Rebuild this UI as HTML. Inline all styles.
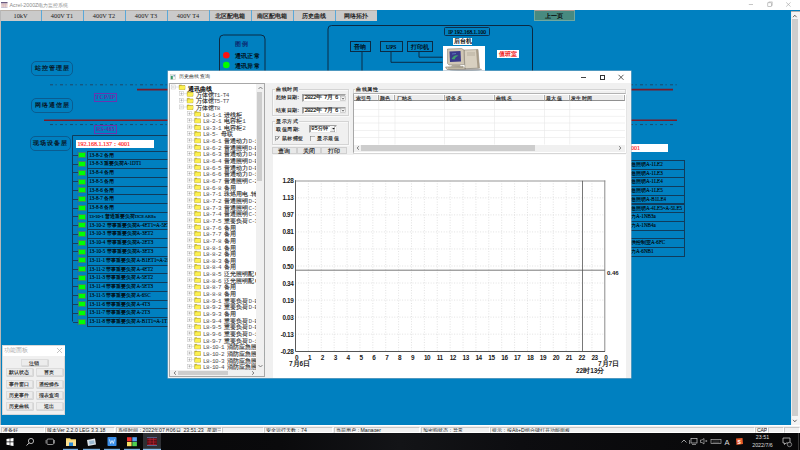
<!DOCTYPE html>
<html><head><meta charset="utf-8">
<style>
*{margin:0;padding:0;box-sizing:border-box}
html,body{width:800px;height:450px;overflow:hidden;background:#0080c0;font-family:"Liberation Sans",sans-serif;}
.a{position:absolute}
#title{left:0;top:0;width:800px;height:10px;background:#fff}
#tabs{left:0;top:10px;width:800px;height:11.3px;background:#0080c0}
.tab+.tab{box-shadow:-1px 0 0 #5aa8d8}
.tab.c{font-family:"Liberation Sans",sans-serif;font-weight:bold;font-size:6px;color:#222}
.tab{position:absolute;top:0;height:11.3px;background:#cacaca;border-top:0.6px solid #b8b0a8;font:6.3px "Liberation Serif",serif;color:#1a1a1a;text-align:center;line-height:10.5px;white-space:nowrap}
#main{left:1px;top:21px;width:790px;height:405px;background:#0080c0}
#vscroll{left:791px;top:10.5px;width:9px;height:414.5px;background:#f4f4f4;border-top:0.6px solid #b0b0b0;box-shadow:inset 0.6px 0 0 #e8e8e8}
#status{left:0;top:425px;width:800px;height:8px;background:#f0f0f0;border-top:0.6px solid #fff}
#taskbar{left:0;top:433px;width:800px;height:17px;background:#0f1012}

.lbox{position:absolute;border:1px solid #0b5c90;border-radius:5px;font:bold 5.8px "Liberation Sans",sans-serif;color:#08141e;text-align:center;letter-spacing:1px;text-indent:1px;white-space:nowrap}
.pbox{position:absolute;border:0.8px solid #6a34b0;font:bold 6px "Liberation Serif",serif;color:#6030a8;text-align:center;white-space:nowrap}
.row{position:absolute;left:87px;width:520px;height:9.77px;border:1px solid #103c5c;font:5.1px "Liberation Serif",serif;color:#000;line-height:7.2px;padding-left:1.2px;-webkit-text-stroke:0.1px #000;white-space:nowrap;overflow:hidden}
.rrow{position:absolute;left:620px;width:64.5px;height:9.7px;border:1px solid #103c5c;border-left:none;font:5.1px "Liberation Serif",serif;color:#000;-webkit-text-stroke:0.1px #000;line-height:7px;padding-left:11px;white-space:nowrap;overflow:hidden}
.gsq{position:absolute;left:78px;width:8.2px;height:6px;background:#00ff00;border:0.5px solid #3a8a6a}
.stub{position:absolute;left:72.5px;width:5px;height:0.7px;background:#1a4060}
.nbox{position:absolute;border:1px solid #0b2a44;font:5.6px "Liberation Serif",serif;color:#000;text-align:center;white-space:nowrap;-webkit-text-stroke:0.15px #000}

#dlg{left:168px;top:71px;width:463px;height:307px;background:#f0f0f0;box-shadow:0 0 0 0.5px #9ab0c0;overflow:hidden}
#dlg .in{position:absolute;left:-168px;top:-71px;width:800px;height:450px}
.tx{position:absolute;width:4px;height:4px;border:0.5px dotted #b0b0b0}
.tx::after{content:"";position:absolute;left:0.8px;top:1.5px;width:1.6px;height:0.5px;background:#888}
.tx i{position:absolute;left:1.45px;top:0.8px;width:0.5px;height:1.6px;background:#888}
.fd{position:absolute;width:6.5px;height:4.8px;background:linear-gradient(#fff8a0,#f0d830);border:0.5px solid #c0a020;border-radius:0.5px}
.tt{position:absolute;font:5.6px "Liberation Mono",monospace;color:#3a3a3a;height:6.6px;line-height:6.6px;white-space:nowrap;-webkit-text-stroke:0 !important}
.tt .as{letter-spacing:-0.6px;font-size:6px;color:#505050}
.tt .cj{letter-spacing:0.1px;color:#1a1a1a;-webkit-text-stroke:0.12px #333}
.tt.b{font-family:"Liberation Sans",sans-serif;font-weight:bold;font-size:6.3px;letter-spacing:0.3px;color:#000;top:-1px}
.grp{position:absolute;border:0.6px solid #d4d4d4;box-shadow:inset 0.6px 0.6px 0 #fff,0.6px 0.6px 0 #fff}
.gl{position:absolute;background:#f0f0f0;font:5.2px "Liberation Sans",sans-serif;color:#1a1a1a;line-height:7px;padding:0 1px;letter-spacing:0.5px;white-space:nowrap}
.lbl{position:absolute;font:5.2px "Liberation Sans",sans-serif;color:#1a1a1a;line-height:7px;letter-spacing:0.5px;white-space:nowrap}
.inp{position:absolute;background:#fff;border:0.6px solid;border-color:#a0a0a0 #e8e8e8 #e8e8e8 #a0a0a0;box-shadow:inset 0.6px 0.6px 0 #696969;font:5.6px "Liberation Mono",monospace;letter-spacing:-0.55px;color:#111;line-height:6.8px;white-space:nowrap;padding-left:1.2px}
.btn{position:absolute;background:#e8e8e8;border:0.5px solid #d0d0d0;font:6px "Liberation Sans",sans-serif;color:#222;line-height:7px;text-align:center}
.th{position:absolute;top:94.6px;height:6.9px;background:#ececec;border-right:0.6px solid #a8a8a8;border-bottom:0.7px solid #909090;box-shadow:inset -0.6px 0 0 #fff;font:5.4px "Liberation Sans",sans-serif;color:#1a1a1a;line-height:6.5px;letter-spacing:0.3px;padding-left:1.5px;white-space:nowrap}
.yl{position:absolute;left:270px;width:23.5px;text-align:right;font:bold 6.4px "Liberation Sans",sans-serif;color:#1a1a1a;letter-spacing:-0.35px;line-height:7px}
.xl{position:absolute;top:353.5px;font:bold 6.4px "Liberation Sans",sans-serif;color:#1a1a1a;letter-spacing:-0.35px;line-height:7px}

.fb{position:absolute;background:#ececec;border:0.5px solid #dcdcdc;box-shadow:0.6px 0.6px 0 #c4c4c4;font:5.1px "Liberation Sans",sans-serif;color:#111;letter-spacing:0.2px;line-height:7.5px;text-align:center;white-space:nowrap;-webkit-text-stroke:0.1px #222 !important}
.sp{position:absolute;top:0.5px;height:6.5px;border-left:0.6px solid #c8c8c8;border-top:0.6px solid #c8c8c8;border-right:0.6px solid #fff;border-bottom:0.6px solid #fff;font:5.2px "Liberation Sans",sans-serif;color:#222;line-height:5.8px;white-space:nowrap;padding-left:1px;overflow:hidden}
.lbl,.gl,.th,.btn,.tt,.inp,.fb{-webkit-text-stroke:0.15px #222}
</style></head><body>
<div id="title" class="a">
 <svg class="a" style="left:1px;top:1.5px" width="7" height="6"><rect x="0" y="0" width="6.5" height="5.5" fill="#f0e0e0"/><rect x="0" y="0" width="6.5" height="1.3" fill="#6a5a80"/><path d="M0 2.6 H6.5 M0 4 H6.5 M2.2 1.3 V5.5 M4.3 1.3 V5.5" stroke="#c8a0a0" stroke-width="0.4"/><rect x="0" y="5" width="6.5" height="0.5" fill="#a0a0c0"/></svg>
 <div class="a" style="left:9.5px;top:1px;font:5.3px 'Liberation Sans',sans-serif;color:#8a8a8a;line-height:8px;white-space:nowrap">Acrel-2000Z电力监控系统</div>
 <svg class="a" style="left:745px;top:0" width="50" height="10">
  <path d="M3.8 4.5 H8" stroke="#a0a0a0" stroke-width="0.6"/>
  <rect x="22.8" y="2.8" width="3.6" height="3.6" fill="none" stroke="#a0a0a0" stroke-width="0.6"/>
  <path d="M23.8 2.8 V1.9 H27.3 V5.4 H26.4" fill="none" stroke="#a0a0a0" stroke-width="0.5"/>
  <path d="M41.2 2.4 L45.6 6.6 M45.6 2.4 L41.2 6.6" stroke="#a0a0a0" stroke-width="0.6"/>
 </svg>
</div>
<div id="tabs" class="a">
 <div class="tab" style="left:0.50px;width:40px">10kV</div>
 <div class="tab" style="left:41.50px;width:41px">400V T1</div>
 <div class="tab" style="left:83.50px;width:41px">400V T2</div>
 <div class="tab" style="left:125.50px;width:41px">400V T3</div>
 <div class="tab" style="left:167.50px;width:41px">400V T4</div>
 <div class="tab c" style="left:209.50px;width:41px">北区配电箱</div>
 <div class="tab c" style="left:251.50px;width:41px">南区配电箱</div>
 <div class="tab c" style="left:293.50px;width:41px">历史曲线</div>
 <div class="tab c" style="left:335.50px;width:41px">网络拓扑</div>
</div>
<div id="main" class="a"></div>
<div class="a" style="left:0;top:10px;width:1px;height:11.3px;background:#b8b8b8"></div>
<div class="a" style="left:0;top:21px;width:1px;height:404px;background:#b8b8b8"></div>

<div id="diagram">
<svg class="a" style="left:0;top:0" width="800" height="450">
 <line x1="50" y1="84.8" x2="678" y2="84.8" stroke="#1e4868" stroke-width="1" stroke-dasharray="3 2.5 1.2 3.3"/>
 <line x1="137" y1="89.6" x2="673" y2="89.6" stroke="#7a1a2a" stroke-width="1.6"/>
 <line x1="44" y1="120.2" x2="677" y2="120.2" stroke="#7a1a2a" stroke-width="1.6"/>
 <line x1="50" y1="124.6" x2="674" y2="124.6" stroke="#1e4868" stroke-width="1" stroke-dasharray="3 2.5 1.2 3.3"/>
 <line x1="72.5" y1="135.5" x2="200" y2="135.5" stroke="#103c5c" stroke-width="1"/>
 <line x1="72.5" y1="135.5" x2="72.5" y2="321.5" stroke="#103c5c" stroke-width="1"/>
 <line x1="77.5" y1="150.5" x2="77.5" y2="326" stroke="#2a6a9a" stroke-width="0.6"/>
 <!-- network box -->
 <path d="M328 72 V29 Q328 25.5 331.5 25.5 H529 Q532.5 25.5 532.5 29 V72" fill="none" stroke="#0b2a44" stroke-width="1"/>
 <line x1="362" y1="52" x2="362" y2="72" stroke="#0b2a44" stroke-width="1"/>
 <path d="M391 52 V62.3 H442.5" fill="none" stroke="#0b2a44" stroke-width="1"/>
 <path d="M419 52 V57.2 H442.5" fill="none" stroke="#0b2a44" stroke-width="1"/>
 <!-- legend box -->
 <path d="M219.5 72 V39 Q219.5 35 223.5 35 H261 Q265 35 265 39 V72" fill="none" stroke="#0b2a44" stroke-width="1"/>
 <circle cx="226.3" cy="55.3" r="3.3" fill="#ff1010"/>
 <circle cx="226.3" cy="65" r="3.3" fill="#00ff00"/>
</svg>
<div class="lbox" style="left:31px;top:61px;width:42px;height:14.5px;line-height:12.5px">站控管理层</div>
<div class="lbox" style="left:31px;top:97.5px;width:41.5px;height:15px;line-height:13px">网络通信层</div>
<div class="lbox" style="left:30px;top:136px;width:40.5px;height:14.5px;line-height:12.5px">现场设备层</div>
<div class="pbox" style="left:93.8px;top:92.5px;width:23.2px;height:9.3px;line-height:7.5px">TCP/IP</div>
<div class="pbox" style="left:94px;top:125px;width:23px;height:9px;line-height:7.5px">RS-485</div>
<div class="a" style="left:76px;top:140.3px;width:78px;height:8px;background:#fff;font:6px 'Liberation Serif',serif;color:#ff1a1a;-webkit-text-stroke:0.15px #ff1a1a;line-height:8px;padding-left:1.5px;white-space:nowrap">192.168.1.137：4001</div>
<div class="a" style="left:631px;top:143.9px;width:37.2px;height:8px;background:#fff;font:6px 'Liberation Serif',serif;color:#ff1a1a;-webkit-text-stroke:0.15px #ff1a1a;line-height:8px;white-space:nowrap">001</div>
<div class="row" style="top:150.50px">13-8-2 备用</div>
<div class="gsq" style="top:152.20px"></div>
<div class="stub" style="top:154.90px"></div>
<div class="row" style="top:159.27px">13-8-3 重要负荷A-1DT1</div>
<div class="gsq" style="top:160.97px"></div>
<div class="stub" style="top:163.67px"></div>
<div class="row" style="top:168.04px">13-8-4 备用</div>
<div class="gsq" style="top:169.74px"></div>
<div class="stub" style="top:172.44px"></div>
<div class="row" style="top:176.81px">13-8-5 备用</div>
<div class="gsq" style="top:178.51px"></div>
<div class="stub" style="top:181.21px"></div>
<div class="row" style="top:185.58px">13-8-6 备用</div>
<div class="gsq" style="top:187.28px"></div>
<div class="stub" style="top:189.98px"></div>
<div class="row" style="top:194.35px">13-8-7 备用</div>
<div class="gsq" style="top:196.05px"></div>
<div class="stub" style="top:198.75px"></div>
<div class="row" style="top:203.12px">13-8-8 备用</div>
<div class="gsq" style="top:204.82px"></div>
<div class="stub" style="top:207.52px"></div>
<div class="row" style="top:211.89px;font-size:4.6px">13-10-1 普通重要负荷DCS ARSa</div>
<div class="gsq" style="top:213.59px"></div>
<div class="stub" style="top:216.29px"></div>
<div class="row" style="top:220.66px">13-10-2 带事重要负荷A-4ET1~A-5ET1</div>
<div class="gsq" style="top:222.36px"></div>
<div class="stub" style="top:225.06px"></div>
<div class="row" style="top:229.43px">13-10-3 带事重要负荷A-3ET2</div>
<div class="gsq" style="top:231.13px"></div>
<div class="stub" style="top:233.83px"></div>
<div class="row" style="top:238.20px">13-10-4 带事重要负荷A-2ET3</div>
<div class="gsq" style="top:239.90px"></div>
<div class="stub" style="top:242.60px"></div>
<div class="row" style="top:246.97px">13-10-5 带事重要负荷A-3ET3</div>
<div class="gsq" style="top:248.67px"></div>
<div class="stub" style="top:251.37px"></div>
<div class="row" style="top:255.74px">13-11-1 带事重要负荷A-B1ET1~A-2ET1</div>
<div class="gsq" style="top:257.44px"></div>
<div class="stub" style="top:260.14px"></div>
<div class="row" style="top:264.51px">13-11-2 带事重要负荷A-4ET2</div>
<div class="gsq" style="top:266.21px"></div>
<div class="stub" style="top:268.91px"></div>
<div class="row" style="top:273.28px">13-11-3 带事重要负荷A-5ET2</div>
<div class="gsq" style="top:274.98px"></div>
<div class="stub" style="top:277.68px"></div>
<div class="row" style="top:282.05px">13-11-4 带事重要负荷A-5ET3</div>
<div class="gsq" style="top:283.75px"></div>
<div class="stub" style="top:286.45px"></div>
<div class="row" style="top:290.82px">13-11-5 带事重要负荷A-6SC</div>
<div class="gsq" style="top:292.52px"></div>
<div class="stub" style="top:295.22px"></div>
<div class="row" style="top:299.59px">13-11-6 带事重要负荷A-4T3</div>
<div class="gsq" style="top:301.29px"></div>
<div class="stub" style="top:303.99px"></div>
<div class="row" style="top:308.36px">13-11-7 带事重要负荷A-2T3</div>
<div class="gsq" style="top:310.06px"></div>
<div class="stub" style="top:312.76px"></div>
<div class="row" style="top:317.13px">13-11-8 带事重要负荷A-B1T1~A-1T1</div>
<div class="gsq" style="top:318.83px"></div>
<div class="stub" style="top:321.53px"></div>
<div class="rrow" style="top:160.00px">急照明A-1LE2</div>
<div class="rrow" style="top:168.70px">急照明A-1LE3</div>
<div class="rrow" style="top:177.40px">急照明A-1LE4</div>
<div class="rrow" style="top:186.10px">急照明A-1LE5</div>
<div class="rrow" style="top:194.80px">急照明A-B1LE4</div>
<div class="rrow" style="top:203.50px">急照明A-4LE5~A-5LE5</div>
<div class="rrow" style="top:212.20px">力A-1NB3a</div>
<div class="rrow" style="top:220.90px">力A-1NB4a</div>
<div class="rrow" style="top:229.60px"></div>
<div class="rrow" style="top:238.30px">供控制室A-6FC</div>
<div class="rrow" style="top:247.00px">力A-6NB1</div>
<div class="a" style="left:234.5px;top:39.5px;font:bold 6.3px 'Liberation Sans',sans-serif;color:#0c2a70;letter-spacing:1px;white-space:nowrap">图例</div>
<div class="a" style="left:235.3px;top:52px;font:6.1px 'Liberation Sans',sans-serif;color:#000;-webkit-text-stroke:0.15px #000;letter-spacing:0.1px;white-space:nowrap;line-height:7px">通讯正常</div>
<div class="a" style="left:235.3px;top:61.7px;font:6.1px 'Liberation Sans',sans-serif;color:#000;-webkit-text-stroke:0.15px #000;letter-spacing:0.1px;white-space:nowrap;line-height:7px">通讯异常</div>
<div class="nbox" style="left:350px;top:40.5px;width:20.7px;height:11.3px;line-height:10px">音响</div>
<div class="nbox" style="left:380px;top:40.5px;width:22.5px;height:11.3px;line-height:10px">UPS</div>
<div class="nbox" style="left:406.5px;top:40.5px;width:26px;height:11.3px;line-height:10px">打印机</div>
<div class="nbox" style="left:443.7px;top:27px;width:46.8px;height:9.2px;line-height:8px;font-size:5.5px;border:0.8px solid #0c3050;border-radius:1.5px">IP 192.168.1.100</div>
<div class="a" style="left:452.7px;top:37.7px;width:19.8px;height:7.2px;background:#fff;font:5.6px 'Liberation Sans',sans-serif;color:#000;-webkit-text-stroke:0.2px #000;text-align:center;line-height:7.2px">后台机</div>
<svg class="a" style="left:442.5px;top:46.3px" width="42" height="26" viewBox="0 0 42 26">
 <rect width="42" height="26" fill="#fff"/>
 <ellipse cx="22" cy="23.5" rx="17" ry="1.6" fill="#555" opacity="0.5"/>
 <!-- tower -->
 <path d="M21 4 L35 3.5 L36.5 22 L22 22.8 Z" fill="#d8d0c0" stroke="#6a6458" stroke-width="0.4"/>
 <path d="M33 3.6 L35 3.5 L36.5 22 L34.5 22.2 Z" fill="#a89c88"/>
 <path d="M24 7 H32 M24 9 H32" stroke="#8a8070" stroke-width="0.4"/>
 <!-- monitor -->
 <path d="M4.5 3 L18.5 2.5 L21 4 L21.5 18.5 L6 19 L4.5 17.5 Z" fill="#cfc6b4" stroke="#5a5448" stroke-width="0.4"/>
 <path d="M6.5 5.5 L17.5 5 L18 15.5 L7 16 Z" fill="#3a3a8a"/>
 <path d="M8.5 13 Q11 8 15.5 9.5 Q12 11 11.5 13.5 Z" fill="#40a070"/>
 <path d="M9 8 L13 7.5" stroke="#6a8ad0" stroke-width="0.7"/>
 <!-- base & keyboard -->
 <path d="M9 19 H17 L18 20.5 H8 Z" fill="#b0a898"/>
 <path d="M2.5 21 L20 20.3 L22.5 23 L4 23.5 Z" fill="#d4ccb8" stroke="#5a5448" stroke-width="0.4"/>
 <path d="M5 22 L20 21.5" stroke="#7a7260" stroke-width="0.5"/>
</svg>
<div class="a" style="left:496.8px;top:50px;width:22.2px;height:8.2px;background:#fff;font:5.8px 'Liberation Sans',sans-serif;color:#f01010;-webkit-text-stroke:0.2px #f01010;text-align:center;line-height:8.2px">值班室</div>
<div class="a" style="left:533.6px;top:10px;width:41.4px;height:11.3px;background:#488a80;border:0.5px solid #70a8a0;border-top-color:#b09890;font:5.8px 'Liberation Sans',sans-serif;color:#0a0a0a;-webkit-text-stroke:0.2px #000;letter-spacing:0.3px;text-align:center;line-height:10.5px">上一页</div>
</div>

<div id="dlg" class="a"><div class="in">
 <div class="a" style="left:168px;top:71px;width:463px;height:12px;background:#fff"></div>
 <svg class="a" style="left:170px;top:73.5px" width="6" height="6"><rect x="0.3" y="0.3" width="5.4" height="5.4" fill="#f4f4f4" stroke="#c8c8c8" stroke-width="0.5"/><rect x="0.8" y="1.8" width="2" height="3.5" fill="#3a9a6a"/><rect x="3.5" y="1" width="1.5" height="1.5" fill="#7aa0c0"/></svg>
 <div class="a" style="left:178.5px;top:71.8px;font:5.2px 'Liberation Sans',sans-serif;color:#333;letter-spacing:0.3px;line-height:8px;white-space:nowrap">历史曲线查询</div>
 <div class="a" style="left:581px;top:76.8px;width:5px;height:0.8px;background:#444"></div>
 <div class="a" style="left:599.5px;top:74.5px;width:5px;height:5px;border:0.8px solid #333"></div>
 <svg class="a" style="left:617px;top:73.5px" width="8" height="7"><path d="M1.5 0.8 L6.5 5.8 M6.5 0.8 L1.5 5.8" stroke="#333" stroke-width="0.8"/></svg>
 <!-- tree panel -->
 <div class="a" style="left:169px;top:83px;width:95.5px;height:294px;background:#fff;border:0.6px solid #a8a8a8"></div>
<svg class="a" style="left:0;top:0" width="800" height="450">
<rect x="171.20" y="85.00" width="4" height="4" fill="none" stroke="#c0c0c0" stroke-width="0.5"/>
<line x1="172.00" y1="87.00" x2="174.40" y2="87.00" stroke="#909090" stroke-width="0.5"/>
<line x1="175.20" y1="87.00" x2="179.00" y2="87.00" stroke="#c8c8c8" stroke-width="0.5"/>
<path d="M179.20 85.00 h2.2 l0.6 0.6 h3 v3.9 h-5.8 z" fill="#d8c828" stroke="#8a7a10" stroke-width="0.4"/>
<path d="M179.90 86.10 h5.4 l-0.7 3.4 h-5.4 z" fill="#fcf050"/>
<rect x="179.50" y="91.65" width="4" height="4" fill="none" stroke="#c0c0c0" stroke-width="0.5"/>
<line x1="180.30" y1="93.65" x2="182.70" y2="93.65" stroke="#909090" stroke-width="0.5"/>
<line x1="183.50" y1="93.65" x2="187.00" y2="93.65" stroke="#c8c8c8" stroke-width="0.5"/>
<line x1="181.50" y1="92.45" x2="181.50" y2="94.85" stroke="#909090" stroke-width="0.5"/>
<path d="M187.20 91.65 h2.2 l0.6 0.6 h3 v3.9 h-5.8 z" fill="#d8c828" stroke="#8a7a10" stroke-width="0.4"/>
<path d="M187.90 92.75 h5.4 l-0.7 3.4 h-5.4 z" fill="#fcf050"/>
<rect x="179.50" y="98.30" width="4" height="4" fill="none" stroke="#c0c0c0" stroke-width="0.5"/>
<line x1="180.30" y1="100.30" x2="182.70" y2="100.30" stroke="#909090" stroke-width="0.5"/>
<line x1="183.50" y1="100.30" x2="187.00" y2="100.30" stroke="#c8c8c8" stroke-width="0.5"/>
<line x1="181.50" y1="99.10" x2="181.50" y2="101.50" stroke="#909090" stroke-width="0.5"/>
<path d="M187.20 98.30 h2.2 l0.6 0.6 h3 v3.9 h-5.8 z" fill="#d8c828" stroke="#8a7a10" stroke-width="0.4"/>
<path d="M187.90 99.40 h5.4 l-0.7 3.4 h-5.4 z" fill="#fcf050"/>
<rect x="179.50" y="104.95" width="4" height="4" fill="none" stroke="#c0c0c0" stroke-width="0.5"/>
<line x1="180.30" y1="106.95" x2="182.70" y2="106.95" stroke="#909090" stroke-width="0.5"/>
<line x1="183.50" y1="106.95" x2="187.00" y2="106.95" stroke="#c8c8c8" stroke-width="0.5"/>
<path d="M187.20 104.95 h2.2 l0.6 0.6 h3 v3.9 h-5.8 z" fill="#d8c828" stroke="#8a7a10" stroke-width="0.4"/>
<path d="M187.90 106.05 h5.4 l-0.7 3.4 h-5.4 z" fill="#fcf050"/>
<rect x="187.50" y="111.60" width="4" height="4" fill="none" stroke="#c0c0c0" stroke-width="0.5"/>
<line x1="188.30" y1="113.60" x2="190.70" y2="113.60" stroke="#909090" stroke-width="0.5"/>
<line x1="191.50" y1="113.60" x2="194.50" y2="113.60" stroke="#c8c8c8" stroke-width="0.5"/>
<line x1="189.50" y1="112.40" x2="189.50" y2="114.80" stroke="#909090" stroke-width="0.5"/>
<path d="M194.70 111.60 h2.2 l0.6 0.6 h3 v3.9 h-5.8 z" fill="#d8c828" stroke="#8a7a10" stroke-width="0.4"/>
<path d="M195.40 112.70 h5.4 l-0.7 3.4 h-5.4 z" fill="#fcf050"/>
<rect x="187.50" y="118.25" width="4" height="4" fill="none" stroke="#c0c0c0" stroke-width="0.5"/>
<line x1="188.30" y1="120.25" x2="190.70" y2="120.25" stroke="#909090" stroke-width="0.5"/>
<line x1="191.50" y1="120.25" x2="194.50" y2="120.25" stroke="#c8c8c8" stroke-width="0.5"/>
<line x1="189.50" y1="119.05" x2="189.50" y2="121.45" stroke="#909090" stroke-width="0.5"/>
<path d="M194.70 118.25 h2.2 l0.6 0.6 h3 v3.9 h-5.8 z" fill="#d8c828" stroke="#8a7a10" stroke-width="0.4"/>
<path d="M195.40 119.35 h5.4 l-0.7 3.4 h-5.4 z" fill="#fcf050"/>
<rect x="187.50" y="124.90" width="4" height="4" fill="none" stroke="#c0c0c0" stroke-width="0.5"/>
<line x1="188.30" y1="126.90" x2="190.70" y2="126.90" stroke="#909090" stroke-width="0.5"/>
<line x1="191.50" y1="126.90" x2="194.50" y2="126.90" stroke="#c8c8c8" stroke-width="0.5"/>
<line x1="189.50" y1="125.70" x2="189.50" y2="128.10" stroke="#909090" stroke-width="0.5"/>
<path d="M194.70 124.90 h2.2 l0.6 0.6 h3 v3.9 h-5.8 z" fill="#d8c828" stroke="#8a7a10" stroke-width="0.4"/>
<path d="M195.40 126.00 h5.4 l-0.7 3.4 h-5.4 z" fill="#fcf050"/>
<rect x="187.50" y="131.55" width="4" height="4" fill="none" stroke="#c0c0c0" stroke-width="0.5"/>
<line x1="188.30" y1="133.55" x2="190.70" y2="133.55" stroke="#909090" stroke-width="0.5"/>
<line x1="191.50" y1="133.55" x2="194.50" y2="133.55" stroke="#c8c8c8" stroke-width="0.5"/>
<line x1="189.50" y1="132.35" x2="189.50" y2="134.75" stroke="#909090" stroke-width="0.5"/>
<path d="M194.70 131.55 h2.2 l0.6 0.6 h3 v3.9 h-5.8 z" fill="#d8c828" stroke="#8a7a10" stroke-width="0.4"/>
<path d="M195.40 132.65 h5.4 l-0.7 3.4 h-5.4 z" fill="#fcf050"/>
<rect x="187.50" y="138.20" width="4" height="4" fill="none" stroke="#c0c0c0" stroke-width="0.5"/>
<line x1="188.30" y1="140.20" x2="190.70" y2="140.20" stroke="#909090" stroke-width="0.5"/>
<line x1="191.50" y1="140.20" x2="194.50" y2="140.20" stroke="#c8c8c8" stroke-width="0.5"/>
<line x1="189.50" y1="139.00" x2="189.50" y2="141.40" stroke="#909090" stroke-width="0.5"/>
<path d="M194.70 138.20 h2.2 l0.6 0.6 h3 v3.9 h-5.8 z" fill="#d8c828" stroke="#8a7a10" stroke-width="0.4"/>
<path d="M195.40 139.30 h5.4 l-0.7 3.4 h-5.4 z" fill="#fcf050"/>
<rect x="187.50" y="144.85" width="4" height="4" fill="none" stroke="#c0c0c0" stroke-width="0.5"/>
<line x1="188.30" y1="146.85" x2="190.70" y2="146.85" stroke="#909090" stroke-width="0.5"/>
<line x1="191.50" y1="146.85" x2="194.50" y2="146.85" stroke="#c8c8c8" stroke-width="0.5"/>
<line x1="189.50" y1="145.65" x2="189.50" y2="148.05" stroke="#909090" stroke-width="0.5"/>
<path d="M194.70 144.85 h2.2 l0.6 0.6 h3 v3.9 h-5.8 z" fill="#d8c828" stroke="#8a7a10" stroke-width="0.4"/>
<path d="M195.40 145.95 h5.4 l-0.7 3.4 h-5.4 z" fill="#fcf050"/>
<rect x="187.50" y="151.50" width="4" height="4" fill="none" stroke="#c0c0c0" stroke-width="0.5"/>
<line x1="188.30" y1="153.50" x2="190.70" y2="153.50" stroke="#909090" stroke-width="0.5"/>
<line x1="191.50" y1="153.50" x2="194.50" y2="153.50" stroke="#c8c8c8" stroke-width="0.5"/>
<line x1="189.50" y1="152.30" x2="189.50" y2="154.70" stroke="#909090" stroke-width="0.5"/>
<path d="M194.70 151.50 h2.2 l0.6 0.6 h3 v3.9 h-5.8 z" fill="#d8c828" stroke="#8a7a10" stroke-width="0.4"/>
<path d="M195.40 152.60 h5.4 l-0.7 3.4 h-5.4 z" fill="#fcf050"/>
<rect x="187.50" y="158.15" width="4" height="4" fill="none" stroke="#c0c0c0" stroke-width="0.5"/>
<line x1="188.30" y1="160.15" x2="190.70" y2="160.15" stroke="#909090" stroke-width="0.5"/>
<line x1="191.50" y1="160.15" x2="194.50" y2="160.15" stroke="#c8c8c8" stroke-width="0.5"/>
<line x1="189.50" y1="158.95" x2="189.50" y2="161.35" stroke="#909090" stroke-width="0.5"/>
<path d="M194.70 158.15 h2.2 l0.6 0.6 h3 v3.9 h-5.8 z" fill="#d8c828" stroke="#8a7a10" stroke-width="0.4"/>
<path d="M195.40 159.25 h5.4 l-0.7 3.4 h-5.4 z" fill="#fcf050"/>
<rect x="187.50" y="164.80" width="4" height="4" fill="none" stroke="#c0c0c0" stroke-width="0.5"/>
<line x1="188.30" y1="166.80" x2="190.70" y2="166.80" stroke="#909090" stroke-width="0.5"/>
<line x1="191.50" y1="166.80" x2="194.50" y2="166.80" stroke="#c8c8c8" stroke-width="0.5"/>
<line x1="189.50" y1="165.60" x2="189.50" y2="168.00" stroke="#909090" stroke-width="0.5"/>
<path d="M194.70 164.80 h2.2 l0.6 0.6 h3 v3.9 h-5.8 z" fill="#d8c828" stroke="#8a7a10" stroke-width="0.4"/>
<path d="M195.40 165.90 h5.4 l-0.7 3.4 h-5.4 z" fill="#fcf050"/>
<rect x="187.50" y="171.45" width="4" height="4" fill="none" stroke="#c0c0c0" stroke-width="0.5"/>
<line x1="188.30" y1="173.45" x2="190.70" y2="173.45" stroke="#909090" stroke-width="0.5"/>
<line x1="191.50" y1="173.45" x2="194.50" y2="173.45" stroke="#c8c8c8" stroke-width="0.5"/>
<line x1="189.50" y1="172.25" x2="189.50" y2="174.65" stroke="#909090" stroke-width="0.5"/>
<path d="M194.70 171.45 h2.2 l0.6 0.6 h3 v3.9 h-5.8 z" fill="#d8c828" stroke="#8a7a10" stroke-width="0.4"/>
<path d="M195.40 172.55 h5.4 l-0.7 3.4 h-5.4 z" fill="#fcf050"/>
<rect x="187.50" y="178.10" width="4" height="4" fill="none" stroke="#c0c0c0" stroke-width="0.5"/>
<line x1="188.30" y1="180.10" x2="190.70" y2="180.10" stroke="#909090" stroke-width="0.5"/>
<line x1="191.50" y1="180.10" x2="194.50" y2="180.10" stroke="#c8c8c8" stroke-width="0.5"/>
<line x1="189.50" y1="178.90" x2="189.50" y2="181.30" stroke="#909090" stroke-width="0.5"/>
<path d="M194.70 178.10 h2.2 l0.6 0.6 h3 v3.9 h-5.8 z" fill="#d8c828" stroke="#8a7a10" stroke-width="0.4"/>
<path d="M195.40 179.20 h5.4 l-0.7 3.4 h-5.4 z" fill="#fcf050"/>
<rect x="187.50" y="184.75" width="4" height="4" fill="none" stroke="#c0c0c0" stroke-width="0.5"/>
<line x1="188.30" y1="186.75" x2="190.70" y2="186.75" stroke="#909090" stroke-width="0.5"/>
<line x1="191.50" y1="186.75" x2="194.50" y2="186.75" stroke="#c8c8c8" stroke-width="0.5"/>
<line x1="189.50" y1="185.55" x2="189.50" y2="187.95" stroke="#909090" stroke-width="0.5"/>
<path d="M194.70 184.75 h2.2 l0.6 0.6 h3 v3.9 h-5.8 z" fill="#d8c828" stroke="#8a7a10" stroke-width="0.4"/>
<path d="M195.40 185.85 h5.4 l-0.7 3.4 h-5.4 z" fill="#fcf050"/>
<rect x="187.50" y="191.40" width="4" height="4" fill="none" stroke="#c0c0c0" stroke-width="0.5"/>
<line x1="188.30" y1="193.40" x2="190.70" y2="193.40" stroke="#909090" stroke-width="0.5"/>
<line x1="191.50" y1="193.40" x2="194.50" y2="193.40" stroke="#c8c8c8" stroke-width="0.5"/>
<line x1="189.50" y1="192.20" x2="189.50" y2="194.60" stroke="#909090" stroke-width="0.5"/>
<path d="M194.70 191.40 h2.2 l0.6 0.6 h3 v3.9 h-5.8 z" fill="#d8c828" stroke="#8a7a10" stroke-width="0.4"/>
<path d="M195.40 192.50 h5.4 l-0.7 3.4 h-5.4 z" fill="#fcf050"/>
<rect x="187.50" y="198.05" width="4" height="4" fill="none" stroke="#c0c0c0" stroke-width="0.5"/>
<line x1="188.30" y1="200.05" x2="190.70" y2="200.05" stroke="#909090" stroke-width="0.5"/>
<line x1="191.50" y1="200.05" x2="194.50" y2="200.05" stroke="#c8c8c8" stroke-width="0.5"/>
<line x1="189.50" y1="198.85" x2="189.50" y2="201.25" stroke="#909090" stroke-width="0.5"/>
<path d="M194.70 198.05 h2.2 l0.6 0.6 h3 v3.9 h-5.8 z" fill="#d8c828" stroke="#8a7a10" stroke-width="0.4"/>
<path d="M195.40 199.15 h5.4 l-0.7 3.4 h-5.4 z" fill="#fcf050"/>
<rect x="187.50" y="204.70" width="4" height="4" fill="none" stroke="#c0c0c0" stroke-width="0.5"/>
<line x1="188.30" y1="206.70" x2="190.70" y2="206.70" stroke="#909090" stroke-width="0.5"/>
<line x1="191.50" y1="206.70" x2="194.50" y2="206.70" stroke="#c8c8c8" stroke-width="0.5"/>
<line x1="189.50" y1="205.50" x2="189.50" y2="207.90" stroke="#909090" stroke-width="0.5"/>
<path d="M194.70 204.70 h2.2 l0.6 0.6 h3 v3.9 h-5.8 z" fill="#d8c828" stroke="#8a7a10" stroke-width="0.4"/>
<path d="M195.40 205.80 h5.4 l-0.7 3.4 h-5.4 z" fill="#fcf050"/>
<rect x="187.50" y="211.35" width="4" height="4" fill="none" stroke="#c0c0c0" stroke-width="0.5"/>
<line x1="188.30" y1="213.35" x2="190.70" y2="213.35" stroke="#909090" stroke-width="0.5"/>
<line x1="191.50" y1="213.35" x2="194.50" y2="213.35" stroke="#c8c8c8" stroke-width="0.5"/>
<line x1="189.50" y1="212.15" x2="189.50" y2="214.55" stroke="#909090" stroke-width="0.5"/>
<path d="M194.70 211.35 h2.2 l0.6 0.6 h3 v3.9 h-5.8 z" fill="#d8c828" stroke="#8a7a10" stroke-width="0.4"/>
<path d="M195.40 212.45 h5.4 l-0.7 3.4 h-5.4 z" fill="#fcf050"/>
<rect x="187.50" y="218.00" width="4" height="4" fill="none" stroke="#c0c0c0" stroke-width="0.5"/>
<line x1="188.30" y1="220.00" x2="190.70" y2="220.00" stroke="#909090" stroke-width="0.5"/>
<line x1="191.50" y1="220.00" x2="194.50" y2="220.00" stroke="#c8c8c8" stroke-width="0.5"/>
<line x1="189.50" y1="218.80" x2="189.50" y2="221.20" stroke="#909090" stroke-width="0.5"/>
<path d="M194.70 218.00 h2.2 l0.6 0.6 h3 v3.9 h-5.8 z" fill="#d8c828" stroke="#8a7a10" stroke-width="0.4"/>
<path d="M195.40 219.10 h5.4 l-0.7 3.4 h-5.4 z" fill="#fcf050"/>
<rect x="187.50" y="224.65" width="4" height="4" fill="none" stroke="#c0c0c0" stroke-width="0.5"/>
<line x1="188.30" y1="226.65" x2="190.70" y2="226.65" stroke="#909090" stroke-width="0.5"/>
<line x1="191.50" y1="226.65" x2="194.50" y2="226.65" stroke="#c8c8c8" stroke-width="0.5"/>
<line x1="189.50" y1="225.45" x2="189.50" y2="227.85" stroke="#909090" stroke-width="0.5"/>
<path d="M194.70 224.65 h2.2 l0.6 0.6 h3 v3.9 h-5.8 z" fill="#d8c828" stroke="#8a7a10" stroke-width="0.4"/>
<path d="M195.40 225.75 h5.4 l-0.7 3.4 h-5.4 z" fill="#fcf050"/>
<rect x="187.50" y="231.30" width="4" height="4" fill="none" stroke="#c0c0c0" stroke-width="0.5"/>
<line x1="188.30" y1="233.30" x2="190.70" y2="233.30" stroke="#909090" stroke-width="0.5"/>
<line x1="191.50" y1="233.30" x2="194.50" y2="233.30" stroke="#c8c8c8" stroke-width="0.5"/>
<line x1="189.50" y1="232.10" x2="189.50" y2="234.50" stroke="#909090" stroke-width="0.5"/>
<path d="M194.70 231.30 h2.2 l0.6 0.6 h3 v3.9 h-5.8 z" fill="#d8c828" stroke="#8a7a10" stroke-width="0.4"/>
<path d="M195.40 232.40 h5.4 l-0.7 3.4 h-5.4 z" fill="#fcf050"/>
<rect x="187.50" y="237.95" width="4" height="4" fill="none" stroke="#c0c0c0" stroke-width="0.5"/>
<line x1="188.30" y1="239.95" x2="190.70" y2="239.95" stroke="#909090" stroke-width="0.5"/>
<line x1="191.50" y1="239.95" x2="194.50" y2="239.95" stroke="#c8c8c8" stroke-width="0.5"/>
<line x1="189.50" y1="238.75" x2="189.50" y2="241.15" stroke="#909090" stroke-width="0.5"/>
<path d="M194.70 237.95 h2.2 l0.6 0.6 h3 v3.9 h-5.8 z" fill="#d8c828" stroke="#8a7a10" stroke-width="0.4"/>
<path d="M195.40 239.05 h5.4 l-0.7 3.4 h-5.4 z" fill="#fcf050"/>
<rect x="187.50" y="244.60" width="4" height="4" fill="none" stroke="#c0c0c0" stroke-width="0.5"/>
<line x1="188.30" y1="246.60" x2="190.70" y2="246.60" stroke="#909090" stroke-width="0.5"/>
<line x1="191.50" y1="246.60" x2="194.50" y2="246.60" stroke="#c8c8c8" stroke-width="0.5"/>
<line x1="189.50" y1="245.40" x2="189.50" y2="247.80" stroke="#909090" stroke-width="0.5"/>
<path d="M194.70 244.60 h2.2 l0.6 0.6 h3 v3.9 h-5.8 z" fill="#d8c828" stroke="#8a7a10" stroke-width="0.4"/>
<path d="M195.40 245.70 h5.4 l-0.7 3.4 h-5.4 z" fill="#fcf050"/>
<rect x="187.50" y="251.25" width="4" height="4" fill="none" stroke="#c0c0c0" stroke-width="0.5"/>
<line x1="188.30" y1="253.25" x2="190.70" y2="253.25" stroke="#909090" stroke-width="0.5"/>
<line x1="191.50" y1="253.25" x2="194.50" y2="253.25" stroke="#c8c8c8" stroke-width="0.5"/>
<line x1="189.50" y1="252.05" x2="189.50" y2="254.45" stroke="#909090" stroke-width="0.5"/>
<path d="M194.70 251.25 h2.2 l0.6 0.6 h3 v3.9 h-5.8 z" fill="#d8c828" stroke="#8a7a10" stroke-width="0.4"/>
<path d="M195.40 252.35 h5.4 l-0.7 3.4 h-5.4 z" fill="#fcf050"/>
<rect x="187.50" y="257.90" width="4" height="4" fill="none" stroke="#c0c0c0" stroke-width="0.5"/>
<line x1="188.30" y1="259.90" x2="190.70" y2="259.90" stroke="#909090" stroke-width="0.5"/>
<line x1="191.50" y1="259.90" x2="194.50" y2="259.90" stroke="#c8c8c8" stroke-width="0.5"/>
<line x1="189.50" y1="258.70" x2="189.50" y2="261.10" stroke="#909090" stroke-width="0.5"/>
<path d="M194.70 257.90 h2.2 l0.6 0.6 h3 v3.9 h-5.8 z" fill="#d8c828" stroke="#8a7a10" stroke-width="0.4"/>
<path d="M195.40 259.00 h5.4 l-0.7 3.4 h-5.4 z" fill="#fcf050"/>
<rect x="187.50" y="264.55" width="4" height="4" fill="none" stroke="#c0c0c0" stroke-width="0.5"/>
<line x1="188.30" y1="266.55" x2="190.70" y2="266.55" stroke="#909090" stroke-width="0.5"/>
<line x1="191.50" y1="266.55" x2="194.50" y2="266.55" stroke="#c8c8c8" stroke-width="0.5"/>
<line x1="189.50" y1="265.35" x2="189.50" y2="267.75" stroke="#909090" stroke-width="0.5"/>
<path d="M194.70 264.55 h2.2 l0.6 0.6 h3 v3.9 h-5.8 z" fill="#d8c828" stroke="#8a7a10" stroke-width="0.4"/>
<path d="M195.40 265.65 h5.4 l-0.7 3.4 h-5.4 z" fill="#fcf050"/>
<rect x="187.50" y="271.20" width="4" height="4" fill="none" stroke="#c0c0c0" stroke-width="0.5"/>
<line x1="188.30" y1="273.20" x2="190.70" y2="273.20" stroke="#909090" stroke-width="0.5"/>
<line x1="191.50" y1="273.20" x2="194.50" y2="273.20" stroke="#c8c8c8" stroke-width="0.5"/>
<line x1="189.50" y1="272.00" x2="189.50" y2="274.40" stroke="#909090" stroke-width="0.5"/>
<path d="M194.70 271.20 h2.2 l0.6 0.6 h3 v3.9 h-5.8 z" fill="#d8c828" stroke="#8a7a10" stroke-width="0.4"/>
<path d="M195.40 272.30 h5.4 l-0.7 3.4 h-5.4 z" fill="#fcf050"/>
<rect x="187.50" y="277.85" width="4" height="4" fill="none" stroke="#c0c0c0" stroke-width="0.5"/>
<line x1="188.30" y1="279.85" x2="190.70" y2="279.85" stroke="#909090" stroke-width="0.5"/>
<line x1="191.50" y1="279.85" x2="194.50" y2="279.85" stroke="#c8c8c8" stroke-width="0.5"/>
<line x1="189.50" y1="278.65" x2="189.50" y2="281.05" stroke="#909090" stroke-width="0.5"/>
<path d="M194.70 277.85 h2.2 l0.6 0.6 h3 v3.9 h-5.8 z" fill="#d8c828" stroke="#8a7a10" stroke-width="0.4"/>
<path d="M195.40 278.95 h5.4 l-0.7 3.4 h-5.4 z" fill="#fcf050"/>
<rect x="187.50" y="284.50" width="4" height="4" fill="none" stroke="#c0c0c0" stroke-width="0.5"/>
<line x1="188.30" y1="286.50" x2="190.70" y2="286.50" stroke="#909090" stroke-width="0.5"/>
<line x1="191.50" y1="286.50" x2="194.50" y2="286.50" stroke="#c8c8c8" stroke-width="0.5"/>
<line x1="189.50" y1="285.30" x2="189.50" y2="287.70" stroke="#909090" stroke-width="0.5"/>
<path d="M194.70 284.50 h2.2 l0.6 0.6 h3 v3.9 h-5.8 z" fill="#d8c828" stroke="#8a7a10" stroke-width="0.4"/>
<path d="M195.40 285.60 h5.4 l-0.7 3.4 h-5.4 z" fill="#fcf050"/>
<rect x="187.50" y="291.15" width="4" height="4" fill="none" stroke="#c0c0c0" stroke-width="0.5"/>
<line x1="188.30" y1="293.15" x2="190.70" y2="293.15" stroke="#909090" stroke-width="0.5"/>
<line x1="191.50" y1="293.15" x2="194.50" y2="293.15" stroke="#c8c8c8" stroke-width="0.5"/>
<line x1="189.50" y1="291.95" x2="189.50" y2="294.35" stroke="#909090" stroke-width="0.5"/>
<path d="M194.70 291.15 h2.2 l0.6 0.6 h3 v3.9 h-5.8 z" fill="#d8c828" stroke="#8a7a10" stroke-width="0.4"/>
<path d="M195.40 292.25 h5.4 l-0.7 3.4 h-5.4 z" fill="#fcf050"/>
<rect x="187.50" y="297.80" width="4" height="4" fill="none" stroke="#c0c0c0" stroke-width="0.5"/>
<line x1="188.30" y1="299.80" x2="190.70" y2="299.80" stroke="#909090" stroke-width="0.5"/>
<line x1="191.50" y1="299.80" x2="194.50" y2="299.80" stroke="#c8c8c8" stroke-width="0.5"/>
<line x1="189.50" y1="298.60" x2="189.50" y2="301.00" stroke="#909090" stroke-width="0.5"/>
<path d="M194.70 297.80 h2.2 l0.6 0.6 h3 v3.9 h-5.8 z" fill="#d8c828" stroke="#8a7a10" stroke-width="0.4"/>
<path d="M195.40 298.90 h5.4 l-0.7 3.4 h-5.4 z" fill="#fcf050"/>
<rect x="187.50" y="304.45" width="4" height="4" fill="none" stroke="#c0c0c0" stroke-width="0.5"/>
<line x1="188.30" y1="306.45" x2="190.70" y2="306.45" stroke="#909090" stroke-width="0.5"/>
<line x1="191.50" y1="306.45" x2="194.50" y2="306.45" stroke="#c8c8c8" stroke-width="0.5"/>
<line x1="189.50" y1="305.25" x2="189.50" y2="307.65" stroke="#909090" stroke-width="0.5"/>
<path d="M194.70 304.45 h2.2 l0.6 0.6 h3 v3.9 h-5.8 z" fill="#d8c828" stroke="#8a7a10" stroke-width="0.4"/>
<path d="M195.40 305.55 h5.4 l-0.7 3.4 h-5.4 z" fill="#fcf050"/>
<rect x="187.50" y="311.10" width="4" height="4" fill="none" stroke="#c0c0c0" stroke-width="0.5"/>
<line x1="188.30" y1="313.10" x2="190.70" y2="313.10" stroke="#909090" stroke-width="0.5"/>
<line x1="191.50" y1="313.10" x2="194.50" y2="313.10" stroke="#c8c8c8" stroke-width="0.5"/>
<line x1="189.50" y1="311.90" x2="189.50" y2="314.30" stroke="#909090" stroke-width="0.5"/>
<path d="M194.70 311.10 h2.2 l0.6 0.6 h3 v3.9 h-5.8 z" fill="#d8c828" stroke="#8a7a10" stroke-width="0.4"/>
<path d="M195.40 312.20 h5.4 l-0.7 3.4 h-5.4 z" fill="#fcf050"/>
<rect x="187.50" y="317.75" width="4" height="4" fill="none" stroke="#c0c0c0" stroke-width="0.5"/>
<line x1="188.30" y1="319.75" x2="190.70" y2="319.75" stroke="#909090" stroke-width="0.5"/>
<line x1="191.50" y1="319.75" x2="194.50" y2="319.75" stroke="#c8c8c8" stroke-width="0.5"/>
<line x1="189.50" y1="318.55" x2="189.50" y2="320.95" stroke="#909090" stroke-width="0.5"/>
<path d="M194.70 317.75 h2.2 l0.6 0.6 h3 v3.9 h-5.8 z" fill="#d8c828" stroke="#8a7a10" stroke-width="0.4"/>
<path d="M195.40 318.85 h5.4 l-0.7 3.4 h-5.4 z" fill="#fcf050"/>
<rect x="187.50" y="324.40" width="4" height="4" fill="none" stroke="#c0c0c0" stroke-width="0.5"/>
<line x1="188.30" y1="326.40" x2="190.70" y2="326.40" stroke="#909090" stroke-width="0.5"/>
<line x1="191.50" y1="326.40" x2="194.50" y2="326.40" stroke="#c8c8c8" stroke-width="0.5"/>
<line x1="189.50" y1="325.20" x2="189.50" y2="327.60" stroke="#909090" stroke-width="0.5"/>
<path d="M194.70 324.40 h2.2 l0.6 0.6 h3 v3.9 h-5.8 z" fill="#d8c828" stroke="#8a7a10" stroke-width="0.4"/>
<path d="M195.40 325.50 h5.4 l-0.7 3.4 h-5.4 z" fill="#fcf050"/>
<rect x="187.50" y="331.05" width="4" height="4" fill="none" stroke="#c0c0c0" stroke-width="0.5"/>
<line x1="188.30" y1="333.05" x2="190.70" y2="333.05" stroke="#909090" stroke-width="0.5"/>
<line x1="191.50" y1="333.05" x2="194.50" y2="333.05" stroke="#c8c8c8" stroke-width="0.5"/>
<line x1="189.50" y1="331.85" x2="189.50" y2="334.25" stroke="#909090" stroke-width="0.5"/>
<path d="M194.70 331.05 h2.2 l0.6 0.6 h3 v3.9 h-5.8 z" fill="#d8c828" stroke="#8a7a10" stroke-width="0.4"/>
<path d="M195.40 332.15 h5.4 l-0.7 3.4 h-5.4 z" fill="#fcf050"/>
<rect x="187.50" y="337.70" width="4" height="4" fill="none" stroke="#c0c0c0" stroke-width="0.5"/>
<line x1="188.30" y1="339.70" x2="190.70" y2="339.70" stroke="#909090" stroke-width="0.5"/>
<line x1="191.50" y1="339.70" x2="194.50" y2="339.70" stroke="#c8c8c8" stroke-width="0.5"/>
<line x1="189.50" y1="338.50" x2="189.50" y2="340.90" stroke="#909090" stroke-width="0.5"/>
<path d="M194.70 337.70 h2.2 l0.6 0.6 h3 v3.9 h-5.8 z" fill="#d8c828" stroke="#8a7a10" stroke-width="0.4"/>
<path d="M195.40 338.80 h5.4 l-0.7 3.4 h-5.4 z" fill="#fcf050"/>
<rect x="187.50" y="344.35" width="4" height="4" fill="none" stroke="#c0c0c0" stroke-width="0.5"/>
<line x1="188.30" y1="346.35" x2="190.70" y2="346.35" stroke="#909090" stroke-width="0.5"/>
<line x1="191.50" y1="346.35" x2="194.50" y2="346.35" stroke="#c8c8c8" stroke-width="0.5"/>
<line x1="189.50" y1="345.15" x2="189.50" y2="347.55" stroke="#909090" stroke-width="0.5"/>
<path d="M194.70 344.35 h2.2 l0.6 0.6 h3 v3.9 h-5.8 z" fill="#d8c828" stroke="#8a7a10" stroke-width="0.4"/>
<path d="M195.40 345.45 h5.4 l-0.7 3.4 h-5.4 z" fill="#fcf050"/>
<rect x="187.50" y="351.00" width="4" height="4" fill="none" stroke="#c0c0c0" stroke-width="0.5"/>
<line x1="188.30" y1="353.00" x2="190.70" y2="353.00" stroke="#909090" stroke-width="0.5"/>
<line x1="191.50" y1="353.00" x2="194.50" y2="353.00" stroke="#c8c8c8" stroke-width="0.5"/>
<line x1="189.50" y1="351.80" x2="189.50" y2="354.20" stroke="#909090" stroke-width="0.5"/>
<path d="M194.70 351.00 h2.2 l0.6 0.6 h3 v3.9 h-5.8 z" fill="#d8c828" stroke="#8a7a10" stroke-width="0.4"/>
<path d="M195.40 352.10 h5.4 l-0.7 3.4 h-5.4 z" fill="#fcf050"/>
<rect x="187.50" y="357.65" width="4" height="4" fill="none" stroke="#c0c0c0" stroke-width="0.5"/>
<line x1="188.30" y1="359.65" x2="190.70" y2="359.65" stroke="#909090" stroke-width="0.5"/>
<line x1="191.50" y1="359.65" x2="194.50" y2="359.65" stroke="#c8c8c8" stroke-width="0.5"/>
<line x1="189.50" y1="358.45" x2="189.50" y2="360.85" stroke="#909090" stroke-width="0.5"/>
<path d="M194.70 357.65 h2.2 l0.6 0.6 h3 v3.9 h-5.8 z" fill="#d8c828" stroke="#8a7a10" stroke-width="0.4"/>
<path d="M195.40 358.75 h5.4 l-0.7 3.4 h-5.4 z" fill="#fcf050"/>
<rect x="187.50" y="364.30" width="4" height="4" fill="none" stroke="#c0c0c0" stroke-width="0.5"/>
<line x1="188.30" y1="366.30" x2="190.70" y2="366.30" stroke="#909090" stroke-width="0.5"/>
<line x1="191.50" y1="366.30" x2="194.50" y2="366.30" stroke="#c8c8c8" stroke-width="0.5"/>
<line x1="189.50" y1="365.10" x2="189.50" y2="367.50" stroke="#909090" stroke-width="0.5"/>
<path d="M194.70 364.30 h2.2 l0.6 0.6 h3 v3.9 h-5.8 z" fill="#d8c828" stroke="#8a7a10" stroke-width="0.4"/>
<path d="M195.40 365.40 h5.4 l-0.7 3.4 h-5.4 z" fill="#fcf050"/>
</svg>
<div class="tt b" style="left:187.5px;top:85.90px">通讯曲线</div>
<div class="tt" style="left:195.5px;top:92.55px"><span class="cj">万体馆</span><span class="as">T1-T4</span></div>
<div class="tt" style="left:195.5px;top:99.20px"><span class="cj">万体馆</span><span class="as">T5-T7</span></div>
<div class="tt" style="left:195.5px;top:105.85px"><span class="cj">万体馆</span><span class="as">T8</span></div>
<div class="tt" style="left:203.0px;top:112.50px"><span class="as">L8-1-1 </span><span class="cj">进线柜</span></div>
<div class="tt" style="left:203.0px;top:119.15px"><span class="as">L8-2-1 </span><span class="cj">电容柜</span><span class="as">1</span></div>
<div class="tt" style="left:203.0px;top:125.80px"><span class="as">L8-3-1 </span><span class="cj">电容柜</span><span class="as">2</span></div>
<div class="tt" style="left:203.0px;top:132.45px"><span class="as">L8-5- </span><span class="cj">母联</span></div>
<div class="tt" style="left:203.0px;top:139.10px"><span class="as">L8-6-1 </span><span class="cj">普通动力</span><span class="as">D-1C</span></div>
<div class="tt" style="left:203.0px;top:145.75px"><span class="as">L8-6-2 </span><span class="cj">普通照明</span><span class="as">D-B1</span></div>
<div class="tt" style="left:203.0px;top:152.40px"><span class="as">L8-6-3 </span><span class="cj">普通动力</span><span class="as">D-B1</span></div>
<div class="tt" style="left:203.0px;top:159.05px"><span class="as">L8-6-4 </span><span class="cj">普通照明</span><span class="as">D-B1</span></div>
<div class="tt" style="left:203.0px;top:165.70px"><span class="as">L8-6-5 </span><span class="cj">普通动力</span><span class="as">D-B1</span></div>
<div class="tt" style="left:203.0px;top:172.35px"><span class="as">L8-6-6 </span><span class="cj">普通动力</span><span class="as">D-1B</span></div>
<div class="tt" style="left:203.0px;top:179.00px"><span class="as">L8-6-7 </span><span class="cj">普通照明</span><span class="as">C-2F</span></div>
<div class="tt" style="left:203.0px;top:185.65px"><span class="as">L8-6-8 </span><span class="cj">备用</span></div>
<div class="tt" style="left:203.0px;top:192.30px"><span class="as">L8-7-1 </span><span class="cj">珠烙用电</span><span class="as">.</span><span class="cj">转留</span></div>
<div class="tt" style="left:203.0px;top:198.95px"><span class="as">L8-7-2 </span><span class="cj">普通照明</span><span class="as">D-2C</span></div>
<div class="tt" style="left:203.0px;top:205.60px"><span class="as">L8-7-3 </span><span class="cj">普通照明</span><span class="as">C-3B</span></div>
<div class="tt" style="left:203.0px;top:212.25px"><span class="as">L8-7-4 </span><span class="cj">普通照明</span><span class="as">C-3C</span></div>
<div class="tt" style="left:203.0px;top:218.90px"><span class="as">L8-7-5 </span><span class="cj">重要负荷</span><span class="as">C-3D</span></div>
<div class="tt" style="left:203.0px;top:225.55px"><span class="as">L8-7-6 </span><span class="cj">备用</span></div>
<div class="tt" style="left:203.0px;top:232.20px"><span class="as">L8-7-7 </span><span class="cj">备用</span></div>
<div class="tt" style="left:203.0px;top:238.85px"><span class="as">L8-7-8 </span><span class="cj">备用</span></div>
<div class="tt" style="left:203.0px;top:245.50px"><span class="as">L8-8-1 </span><span class="cj">备用</span></div>
<div class="tt" style="left:203.0px;top:252.15px"><span class="as">L8-8-2 </span><span class="cj">备用</span></div>
<div class="tt" style="left:203.0px;top:258.80px"><span class="as">L8-8-3 </span><span class="cj">备用</span></div>
<div class="tt" style="left:203.0px;top:265.45px"><span class="as">L8-8-4 </span><span class="cj">备用</span></div>
<div class="tt" style="left:203.0px;top:272.10px"><span class="as">L8-8-5 </span><span class="cj">泛光照明配电</span></div>
<div class="tt" style="left:203.0px;top:278.75px"><span class="as">L8-8-6 </span><span class="cj">泛光照明配电</span></div>
<div class="tt" style="left:203.0px;top:285.40px"><span class="as">L8-8-7 </span><span class="cj">备用</span></div>
<div class="tt" style="left:203.0px;top:292.05px"><span class="as">L8-8-8 </span><span class="cj">备用</span></div>
<div class="tt" style="left:203.0px;top:298.70px"><span class="as">L8-9-1 </span><span class="cj">重要负荷</span><span class="as">D-B1</span></div>
<div class="tt" style="left:203.0px;top:305.35px"><span class="as">L8-9-2 </span><span class="cj">重要负荷</span><span class="as">D-B1</span></div>
<div class="tt" style="left:203.0px;top:312.00px"><span class="as">L8-9-3 </span><span class="cj">备用</span></div>
<div class="tt" style="left:203.0px;top:318.65px"><span class="as">L8-9-4 </span><span class="cj">重要负荷</span><span class="as">D-B1</span></div>
<div class="tt" style="left:203.0px;top:325.30px"><span class="as">L8-9-5 </span><span class="cj">重要负荷</span><span class="as">D-B1</span></div>
<div class="tt" style="left:203.0px;top:331.95px"><span class="as">L8-9-6 </span><span class="cj">重要负荷</span><span class="as">D-1C</span></div>
<div class="tt" style="left:203.0px;top:338.60px"><span class="as">L8-9-7 </span><span class="cj">重要负荷</span><span class="as">D-11</span></div>
<div class="tt" style="left:203.0px;top:345.25px"><span class="as">L8-10-1 </span><span class="cj">消防应急照明</span></div>
<div class="tt" style="left:203.0px;top:351.90px"><span class="as">L8-10-2 </span><span class="cj">消防应急照明</span></div>
<div class="tt" style="left:203.0px;top:358.55px"><span class="as">L8-10-3 </span><span class="cj">消防应急照明</span></div>
<div class="tt" style="left:203.0px;top:365.20px"><span class="as">L8-10-4 </span><span class="cj">消防应急照明</span></div>
 <div class="a" style="left:256.2px;top:83.6px;width:7.8px;height:286px;background:#f0f0f0"></div>
 <div class="a" style="left:257px;top:92px;width:5px;height:89px;background:#cdcdcd"></div>
 <svg class="a" style="left:256.5px;top:84.5px" width="7" height="6"><path d="M1.5 4 L3.5 2 L5.5 4" fill="none" stroke="#555" stroke-width="0.7"/></svg>
 <svg class="a" style="left:256.5px;top:363px" width="7" height="6"><path d="M1.5 2 L3.5 4 L5.5 2" fill="none" stroke="#555" stroke-width="0.7"/></svg>
 <div class="a" style="left:169.6px;top:369.6px;width:94.5px;height:6.8px;background:#f0f0f0"></div>
 <div class="a" style="left:177.7px;top:370.5px;width:50px;height:4.5px;background:#cdcdcd"></div>
 <svg class="a" style="left:172px;top:370px" width="6" height="6"><path d="M4 1.2 L2 3 L4 4.8" fill="none" stroke="#555" stroke-width="0.7"/></svg>
 <svg class="a" style="left:250px;top:370px" width="6" height="6"><path d="M2 1.2 L4 3 L2 4.8" fill="none" stroke="#555" stroke-width="0.7"/></svg>
 <!-- curve time group -->
 <div class="grp" style="left:272px;top:88.6px;width:77px;height:27.8px"></div>
 <div class="gl" style="left:275px;top:85.5px">曲线时间</div>
 <div class="lbl" style="left:275.5px;top:93.5px">起始日期:</div>
 <div class="inp" style="left:302.3px;top:94px;width:44.2px;height:7.5px">2022年&nbsp;7月&nbsp;6</div>
 <div class="lbl" style="left:275.5px;top:106.5px">结束日期:</div>
 <div class="inp" style="left:302.3px;top:106.5px;width:44.2px;height:7.5px">2022年&nbsp;7月&nbsp;6</div>
 <svg class="a" style="left:339.5px;top:95.5px" width="6" height="5"><rect x="0.3" y="0.3" width="5.4" height="4.4" fill="#f4f4f4" stroke="#999" stroke-width="0.4"/><path d="M1.8 1.8 L3 3.2 L4.2 1.8" fill="none" stroke="#222" stroke-width="0.6"/></svg>
 <svg class="a" style="left:339.5px;top:108px" width="6" height="5"><rect x="0.3" y="0.3" width="5.4" height="4.4" fill="#f4f4f4" stroke="#999" stroke-width="0.4"/><path d="M1.8 1.8 L3 3.2 L4.2 1.8" fill="none" stroke="#222" stroke-width="0.6"/></svg>
 <!-- display group -->
 <div class="grp" style="left:272px;top:120.5px;width:77px;height:24.5px"></div>
 <div class="gl" style="left:275px;top:117.5px">显示方式</div>
 <div class="lbl" style="left:276px;top:125.5px">取值周期:</div>
 <div class="inp" style="left:309px;top:124.5px;width:27.5px;height:8px;line-height:7px;font-size:5.2px;letter-spacing:0.1px">05分钟</div>
 <div class="a" style="left:330.3px;top:125.5px;width:5.2px;height:6px;background:#ececec;box-shadow:inset -0.5px -0.5px 0 #888,inset 0.5px 0.5px 0 #fff"></div>
 <svg class="a" style="left:330.5px;top:126px" width="5" height="5"><path d="M1.2 2 L2.5 3.5 L3.8 2 Z" fill="#111"/></svg>
 <div class="a" style="left:275px;top:136px;width:4.5px;height:4.5px;background:#f4f4f4;box-shadow:inset 0.6px 0.6px 0 #777"></div>
 <svg class="a" style="left:275px;top:136px" width="5" height="5"><path d="M1 2.4 L2 3.5 L4 1" fill="none" stroke="#222" stroke-width="0.7"/></svg>
 <div class="lbl" style="left:281.5px;top:135px">鼠标捕捉</div>
 <div class="a" style="left:310px;top:136px;width:4.5px;height:4.5px;background:#f4f4f4;box-shadow:inset 0.6px 0.6px 0 #777"></div>
 <div class="lbl" style="left:317px;top:135px">显示最值</div>
 <!-- buttons -->
 <div class="btn" style="left:272px;top:146.5px;width:24.5px;height:7.5px">查询</div>
 <div class="btn" style="left:296.5px;top:146.5px;width:24.5px;height:7.5px">关闭</div>
 <div class="btn" style="left:321px;top:146.5px;width:25.5px;height:7.5px">打印</div>
 <!-- curve attr group -->
 <div class="grp" style="left:353px;top:88.8px;width:273px;height:65px"></div>
 <div class="gl" style="left:355px;top:85.5px">曲线属性</div>
 <div class="a" style="left:353.5px;top:94px;width:272px;height:59px;background:#fff;box-shadow:-0.6px -0.6px 0 #8a8a8a,0.6px 0.6px 0 #d8d8d8"></div>
 <div class="th" style="left:354px;width:24.7px">索引号</div>
 <div class="th" style="left:378.7px;width:16.3px">颜色</div>
 <div class="th" style="left:395px;width:49.5px">厂站名</div>
 <div class="th" style="left:444.5px;width:50px">设备名</div>
 <div class="th" style="left:494.5px;width:50px">曲线名</div>
 <div class="th" style="left:544.5px;width:25.2px">最大值</div>
 <div class="th" style="left:569.7px;width:55.8px">发生时间</div>
 <svg class="a" style="left:0;top:0" width="800" height="450">
  <g stroke="#e8e8e8" stroke-width="0.6">
   <line x1="354" y1="109.5" x2="625" y2="109.5"/><line x1="354" y1="116.3" x2="625" y2="116.3"/><line x1="354" y1="123" x2="625" y2="123"/><line x1="354" y1="130.5" x2="625" y2="130.5"/><line x1="354" y1="137.5" x2="625" y2="137.5"/>
   <line x1="378.7" y1="101" x2="378.7" y2="144.5"/><line x1="395" y1="101" x2="395" y2="144.5"/><line x1="444.5" y1="101" x2="444.5" y2="144.5"/><line x1="494.5" y1="101" x2="494.5" y2="144.5"/><line x1="544.5" y1="101" x2="544.5" y2="144.5"/><line x1="569.7" y1="101" x2="569.7" y2="144.5"/>
  </g>
 </svg>
 <div class="a" style="left:354px;top:144.5px;width:271px;height:7.5px;background:#f0f0f0"></div>
 <div class="a" style="left:360.5px;top:145.2px;width:174.5px;height:6px;background:#cdcdcd"></div>
 <svg class="a" style="left:355px;top:144.8px" width="6" height="6"><path d="M4 1.2 L2 3 L4 4.8" fill="none" stroke="#555" stroke-width="0.7"/></svg>
 <svg class="a" style="left:617px;top:144.8px" width="6" height="6"><path d="M2 1.2 L4 3 L2 4.8" fill="none" stroke="#555" stroke-width="0.7"/></svg>
 <!-- chart panel -->
 <div class="a" style="left:273px;top:154.8px;width:352.5px;height:223px;background:#fff"></div>
 <svg class="a" style="left:0;top:0" width="800" height="450">
<line x1="308.39" y1="180.8" x2="308.39" y2="351.2" stroke="#cfcfcf" stroke-width="0.6" stroke-dasharray="1 1.6"/>
<line x1="321.27" y1="180.8" x2="321.27" y2="351.2" stroke="#cfcfcf" stroke-width="0.6" stroke-dasharray="1 1.6"/>
<line x1="334.16" y1="180.8" x2="334.16" y2="351.2" stroke="#cfcfcf" stroke-width="0.6" stroke-dasharray="1 1.6"/>
<line x1="347.05" y1="180.8" x2="347.05" y2="351.2" stroke="#cfcfcf" stroke-width="0.6" stroke-dasharray="1 1.6"/>
<line x1="359.94" y1="180.8" x2="359.94" y2="351.2" stroke="#cfcfcf" stroke-width="0.6" stroke-dasharray="1 1.6"/>
<line x1="372.82" y1="180.8" x2="372.82" y2="351.2" stroke="#cfcfcf" stroke-width="0.6" stroke-dasharray="1 1.6"/>
<line x1="385.71" y1="180.8" x2="385.71" y2="351.2" stroke="#cfcfcf" stroke-width="0.6" stroke-dasharray="1 1.6"/>
<line x1="398.60" y1="180.8" x2="398.60" y2="351.2" stroke="#cfcfcf" stroke-width="0.6" stroke-dasharray="1 1.6"/>
<line x1="411.49" y1="180.8" x2="411.49" y2="351.2" stroke="#cfcfcf" stroke-width="0.6" stroke-dasharray="1 1.6"/>
<line x1="424.38" y1="180.8" x2="424.38" y2="351.2" stroke="#cfcfcf" stroke-width="0.6" stroke-dasharray="1 1.6"/>
<line x1="437.26" y1="180.8" x2="437.26" y2="351.2" stroke="#cfcfcf" stroke-width="0.6" stroke-dasharray="1 1.6"/>
<line x1="450.15" y1="180.8" x2="450.15" y2="351.2" stroke="#cfcfcf" stroke-width="0.6" stroke-dasharray="1 1.6"/>
<line x1="463.04" y1="180.8" x2="463.04" y2="351.2" stroke="#cfcfcf" stroke-width="0.6" stroke-dasharray="1 1.6"/>
<line x1="475.92" y1="180.8" x2="475.92" y2="351.2" stroke="#cfcfcf" stroke-width="0.6" stroke-dasharray="1 1.6"/>
<line x1="488.81" y1="180.8" x2="488.81" y2="351.2" stroke="#cfcfcf" stroke-width="0.6" stroke-dasharray="1 1.6"/>
<line x1="501.70" y1="180.8" x2="501.70" y2="351.2" stroke="#cfcfcf" stroke-width="0.6" stroke-dasharray="1 1.6"/>
<line x1="514.59" y1="180.8" x2="514.59" y2="351.2" stroke="#cfcfcf" stroke-width="0.6" stroke-dasharray="1 1.6"/>
<line x1="527.47" y1="180.8" x2="527.47" y2="351.2" stroke="#cfcfcf" stroke-width="0.6" stroke-dasharray="1 1.6"/>
<line x1="540.36" y1="180.8" x2="540.36" y2="351.2" stroke="#cfcfcf" stroke-width="0.6" stroke-dasharray="1 1.6"/>
<line x1="553.25" y1="180.8" x2="553.25" y2="351.2" stroke="#cfcfcf" stroke-width="0.6" stroke-dasharray="1 1.6"/>
<line x1="566.14" y1="180.8" x2="566.14" y2="351.2" stroke="#cfcfcf" stroke-width="0.6" stroke-dasharray="1 1.6"/>
<line x1="579.02" y1="180.8" x2="579.02" y2="351.2" stroke="#cfcfcf" stroke-width="0.6" stroke-dasharray="1 1.6"/>
<line x1="591.91" y1="180.8" x2="591.91" y2="351.2" stroke="#cfcfcf" stroke-width="0.6" stroke-dasharray="1 1.6"/>
<line x1="295.5" y1="197.84" x2="604.8" y2="197.84" stroke="#cfcfcf" stroke-width="0.6" stroke-dasharray="1 1.6"/>
<line x1="295.5" y1="214.88" x2="604.8" y2="214.88" stroke="#cfcfcf" stroke-width="0.6" stroke-dasharray="1 1.6"/>
<line x1="295.5" y1="231.92" x2="604.8" y2="231.92" stroke="#cfcfcf" stroke-width="0.6" stroke-dasharray="1 1.6"/>
<line x1="295.5" y1="248.96" x2="604.8" y2="248.96" stroke="#cfcfcf" stroke-width="0.6" stroke-dasharray="1 1.6"/>
<line x1="295.5" y1="266.00" x2="604.8" y2="266.00" stroke="#cfcfcf" stroke-width="0.6" stroke-dasharray="1 1.6"/>
<line x1="295.5" y1="283.04" x2="604.8" y2="283.04" stroke="#cfcfcf" stroke-width="0.6" stroke-dasharray="1 1.6"/>
<line x1="295.5" y1="300.08" x2="604.8" y2="300.08" stroke="#cfcfcf" stroke-width="0.6" stroke-dasharray="1 1.6"/>
<line x1="295.5" y1="317.12" x2="604.8" y2="317.12" stroke="#cfcfcf" stroke-width="0.6" stroke-dasharray="1 1.6"/>
<line x1="295.5" y1="334.16" x2="604.8" y2="334.16" stroke="#cfcfcf" stroke-width="0.6" stroke-dasharray="1 1.6"/>
<line x1="295" y1="181" x2="605.3" y2="181" stroke="#b8b8b8" stroke-width="1.6"/>
<line x1="604.8" y1="180.5" x2="604.8" y2="351.5" stroke="#8a8a8a" stroke-width="1"/>
<line x1="295.5" y1="180.2" x2="295.5" y2="351.5" stroke="#5a5a5a" stroke-width="1"/>
<line x1="295.5" y1="351.5" x2="605" y2="351.5" stroke="#555" stroke-width="1"/>
<line x1="295.5" y1="270.2" x2="604.8" y2="270.2" stroke="#555" stroke-width="0.8"/>
<line x1="582.5" y1="180.8" x2="582.5" y2="351.2" stroke="#555" stroke-width="0.8"/>
</svg>
<div class="yl" style="top:177.30px">1.28</div>
<div class="yl" style="top:194.34px">1.13</div>
<div class="yl" style="top:211.38px">0.97</div>
<div class="yl" style="top:228.42px">0.81</div>
<div class="yl" style="top:245.46px">0.66</div>
<div class="yl" style="top:262.50px">0.50</div>
<div class="yl" style="top:279.54px">0.34</div>
<div class="yl" style="top:296.58px">0.19</div>
<div class="yl" style="top:313.62px">0.03</div>
<div class="yl" style="top:330.66px">-0.13</div>
<div class="yl" style="top:347.70px">-0.28</div>
<div class="xl" style="left:295.00px">0</div>
<div class="xl" style="left:307.89px">1</div>
<div class="xl" style="left:320.77px">2</div>
<div class="xl" style="left:333.66px">3</div>
<div class="xl" style="left:346.55px">4</div>
<div class="xl" style="left:359.44px">5</div>
<div class="xl" style="left:372.32px">6</div>
<div class="xl" style="left:385.21px">7</div>
<div class="xl" style="left:398.10px">8</div>
<div class="xl" style="left:410.99px">9</div>
<div class="xl" style="left:423.88px">10</div>
<div class="xl" style="left:436.76px">11</div>
<div class="xl" style="left:449.65px">12</div>
<div class="xl" style="left:462.54px">13</div>
<div class="xl" style="left:475.42px">14</div>
<div class="xl" style="left:488.31px">15</div>
<div class="xl" style="left:501.20px">16</div>
<div class="xl" style="left:514.09px">17</div>
<div class="xl" style="left:526.97px">18</div>
<div class="xl" style="left:539.86px">19</div>
<div class="xl" style="left:552.75px">20</div>
<div class="xl" style="left:565.64px">21</div>
<div class="xl" style="left:578.52px">22</div>
<div class="xl" style="left:591.41px">23</div>
<div class="xl" style="left:604.30px">0</div>
 <div class="a" style="left:607px;top:270px;font:bold 6px 'Liberation Sans',sans-serif;color:#222;line-height:7px">0.46</div>
 <div class="a" style="left:289px;top:360px;font:bold 6.5px 'Liberation Sans',sans-serif;color:#222;line-height:7px;white-space:nowrap">7月6日</div>
 <div class="a" style="left:598px;top:360px;font:bold 6.5px 'Liberation Sans',sans-serif;color:#222;line-height:7px;white-space:nowrap">7月7日</div>
 <div class="a" style="left:576px;top:366.5px;font:bold 6.5px 'Liberation Sans',sans-serif;color:#222;line-height:7px;white-space:nowrap">22时13分</div>
</div></div>

<!-- function panel -->
<div class="a" style="left:2px;top:345.3px;width:63px;height:70.2px;background:#f0f0f0;border:0.5px solid #d8d8d8"></div>
<div class="a" style="left:2.5px;top:345.8px;width:62px;height:10px;background:#fff"></div>
<div class="a" style="left:4px;top:347px;font:6px 'Liberation Sans',sans-serif;color:#aaa;line-height:7px;white-space:nowrap">功能面板</div>
<svg class="a" style="left:55.5px;top:347px" width="7" height="7"><path d="M1 1 L6 6 M6 1 L1 6" stroke="#aaa" stroke-width="0.7"/></svg>
<div class="fb" style="left:20.8px;top:358.7px;width:26.8px;height:7.6px">注销</div>
<div class="fb" style="left:5.7px;top:368.4px;width:27.2px;height:8px">默认状态</div>
<div class="fb" style="left:35.5px;top:368.4px;width:27.1px;height:8px">首页</div>
<div class="fb" style="left:5.7px;top:380px;width:27.2px;height:7.6px">事件窗口</div>
<div class="fb" style="left:35.5px;top:380px;width:27.1px;height:7.6px">遥控操作</div>
<div class="fb" style="left:5.7px;top:390.7px;width:27.2px;height:8px">历史事件</div>
<div class="fb" style="left:35.5px;top:390.7px;width:27.1px;height:8px">报表查询</div>
<div class="fb" style="left:5.7px;top:402.2px;width:27.2px;height:8px">历史曲线</div>
<div class="fb" style="left:35.5px;top:402.2px;width:27.1px;height:8px">退出</div>
<div id="vscroll" class="a">
 <div class="a" style="left:1.2px;top:7.3px;width:5.6px;height:397px;background:#cdcdcd"></div>
 <svg class="a" style="left:0;top:1px" width="9" height="6"><path d="M2 4.2 L3.8 2.2 L5.6 4.2" fill="none" stroke="#555" stroke-width="0.9"/></svg>
 <svg class="a" style="left:0;top:406.5px" width="9" height="6"><path d="M2 1.8 L3.8 3.8 L5.6 1.8" fill="none" stroke="#555" stroke-width="0.9"/></svg>
</div>
<div id="status" class="a">
 <div class="sp" style="left:0.5px;width:44px">准备好</div>
 <div class="sp" style="left:45px;width:70px">版本Ver 2.2.0 LEG 3.3.18</div>
 <div class="sp" style="left:115.5px;width:106px">系统时间：2022年07月06日&nbsp;&nbsp;23:51:23&nbsp;&nbsp;星期三</div>
 <div class="sp" style="left:222px;width:41.5px"></div>
 <div class="sp" style="left:264px;width:69px">安全运行天数：74</div>
 <div class="sp" style="left:333.5px;width:86.5px">当前用户：Manager</div>
 <div class="sp" style="left:420.5px;width:69px">加密狗状态：异常</div>
 <div class="sp" style="left:490px;width:264.5px">提示：按Alt+D组合键打开功能面板</div>
 <div class="sp" style="left:754.5px;width:13px;padding-left:1.5px;letter-spacing:-0.2px">CAP</div>
 <div class="sp" style="left:767.5px;width:16px"></div>
 <div class="sp" style="left:784px;width:16px"></div>
</div>
<div id="taskbar" class="a">
<svg class="a" style="left:0;top:0" width="800" height="17">
 <defs><linearGradient id="tbg" x1="0" x2="1" y1="0" y2="0"><stop offset="0" stop-color="#060607"/><stop offset="0.35" stop-color="#0a0a0c"/><stop offset="0.5" stop-color="#131417"/><stop offset="0.65" stop-color="#0d0d10"/><stop offset="1" stop-color="#070708"/></linearGradient></defs>
 <rect x="0" y="0" width="800" height="17" fill="url(#tbg)"/>
 <!-- windows logo -->
 <path d="M6.5 6 L9.7 5.5 V8.6 H6.5 Z M10.3 5.4 L13.5 4.9 V8.6 H10.3 Z M6.5 9.2 H9.7 V12.3 L6.5 11.8 Z M10.3 9.2 H13.5 V12.9 L10.3 12.4 Z" fill="#fff"/>
 <!-- search -->
 <circle cx="31" cy="8" r="2.6" fill="none" stroke="#ddd" stroke-width="0.8"/>
 <line x1="29.2" y1="9.9" x2="26.6" y2="12.5" stroke="#ddd" stroke-width="0.9"/>
 <!-- task view -->
 <rect x="47" y="6" width="6.5" height="5.5" rx="1" fill="none" stroke="#ccc" stroke-width="0.7"/>
 <path d="M46 7 V10.5 M54.5 7 V10.5" stroke="#ccc" stroke-width="0.6"/>
 <!-- explorer -->
 <path d="M66 5.2 H70 L71 6.2 H76 V13 H66 Z" fill="#f8d870"/>
 <rect x="66" y="7.5" width="10" height="5.5" fill="#fbe090"/>
 <rect x="69" y="9.5" width="4" height="3.5" fill="#2a8ad8"/>
 <rect x="63" y="15.8" width="15" height="1.2" fill="#7ab0e0"/>
 <!-- app 2 -->
 <path d="M87 7 L95 5.5 L96 11.5 L88 13 Z" fill="#dde4ea"/>
 <path d="M89 8 L94 7.2 L94.6 10.6 L89.6 11.4 Z" fill="#9ab8d0"/>
 <rect x="83" y="15.8" width="17" height="1.2" fill="#7ab0e0"/>
 <!-- wps -->
 <rect x="107.5" y="4" width="9" height="9" rx="0.8" fill="#3a8ee8"/>
 <path d="M109.5 6.5 L110.7 10.5 L112 7.5 L113.3 10.5 L114.5 6.5" fill="none" stroke="#fff" stroke-width="0.7"/>
 <rect x="104" y="15.8" width="16" height="1.2" fill="#7ab0e0"/>
 <!-- grid icon -->
 <rect x="127" y="4.2" width="4.6" height="4.2" fill="#f03030"/>
 <rect x="132.3" y="4.2" width="4.6" height="4.2" fill="#5aa0f0"/>
 <rect x="127" y="9" width="4.6" height="4.2" fill="#f8e060"/>
 <rect x="132.3" y="9" width="4.6" height="4.2" fill="#50d050"/>
 <rect x="124" y="15.8" width="16" height="1.2" fill="#7ab0e0"/>
 <!-- active app -->
 <rect x="143" y="0" width="18" height="17" fill="#2e2f33"/>
 <rect x="147" y="4.5" width="10" height="8" fill="#5a1018"/>
 <path d="M147.5 6.5 H156.5 M147.5 9 H156.5 M147.5 11.5 H156.5 M150 5 V12 M153.5 5 V12" stroke="#c02030" stroke-width="0.6"/>
 <rect x="147" y="4.3" width="10" height="0.8" fill="#5a7ab0"/>
 <rect x="147" y="12.2" width="10" height="0.8" fill="#5a7ab0"/>
 <rect x="143" y="15.8" width="18" height="1.2" fill="#8ac0f0"/>
 <!-- tray -->
 <path d="M681.5 9.5 L684 7 L686.5 9.5" fill="none" stroke="#ddd" stroke-width="0.7"/>
 <rect x="691" y="5.5" width="6" height="4.5" fill="none" stroke="#ccc" stroke-width="0.7"/>
 <path d="M689.5 7 V11 M692 11.5 H696" stroke="#ccc" stroke-width="0.6"/>
 <path d="M700.5 7 H702 L704 5.5 V11 L702 9.5 H700.5 Z" fill="none" stroke="#ccc" stroke-width="0.6"/>
 <path d="M705.5 7 L707 9 M707 7 L705.5 9" stroke="#ccc" stroke-width="0.5"/>
 <rect x="711" y="6.5" width="10" height="4" fill="none" stroke="#ccc" stroke-width="0.6"/>
 <path d="M712.5 8 H719.5 M712.5 9.5 H719.5" stroke="#888" stroke-width="0.4"/>
 <text x="724.5" y="12" font-family="Liberation Sans" font-size="7.5" fill="#ddd">A</text>
 <path d="M736 5.5 L742.5 5 L743 11 L736.5 12 Z" fill="#e85a28"/>
 <text x="737.5" y="10.5" font-family="Liberation Sans" font-size="5" font-weight="bold" fill="#fff">S</text>
 <text x="762.5" y="6.2" font-family="Liberation Sans" font-size="5.3" fill="#ddd" text-anchor="middle">23:51</text>
 <text x="762.5" y="13.5" font-family="Liberation Sans" font-size="5.3" fill="#ddd" text-anchor="middle">2022/7/6</text>
 <path d="M783 5 H790 V10 H786 L784.5 11.5 V10 H783 Z" fill="none" stroke="#ddd" stroke-width="0.7"/>
 <circle cx="789.5" cy="11.5" r="2.2" fill="#0f1012" stroke="#ddd" stroke-width="0.5"/>
 <path d="M798.5 0 V17" stroke="#444" stroke-width="0.8"/>
</svg>
</div>
</body></html>
